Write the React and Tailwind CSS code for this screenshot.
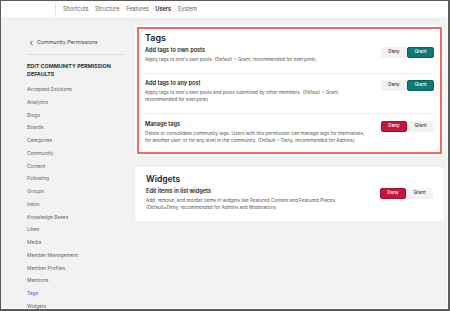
import React from "react";

const navItems = ["Shortcuts", "Structure", "Features", "Users", "System"];

const sideItems = [
  "Accepted Solutions",
  "Analytics",
  "Blogs",
  "Boards",
  "Categories",
  "Community",
  "Content",
  "Following",
  "Groups",
  "Inbox",
  "Knowledge Bases",
  "Likes",
  "Media",
  "Member Management",
  "Member Profiles",
  "Mentions",
  "Tags",
  "Widgets",
];

const tagRows = [
  {
    title: "Add tags to own posts",
    desc: ["Apply tags to one's own posts. (Default = Grant; recommended for everyone)"],
    value: "grant",
  },
  {
    title: "Add tags to any post",
    desc: [
      "Apply tags to one's own posts and posts submitted by other members. (Default = Grant;",
      "recommended for everyone)",
    ],
    value: "grant",
  },
  {
    title: "Manage tags",
    desc: [
      "Delete or consolidate community tags. Users with this permission can manage tags for themselves,",
      "for another user, or for any level in the community. (Default = Deny; recommended for Admins)",
    ],
    value: "deny",
  },
];

// Deny / Grant toggle
function Toggle({ value }) {
  return (
    <div className="flex shrink-0">
      <button
        className={
          value === "deny"
            ? "w-[26px] h-[11px] rounded-[2px] bg-[#c3173f] border border-[#a8102f] text-white text-[4.6px] font-medium leading-none"
            : "w-[26px] h-[11px] rounded-l-[2px] bg-[#f1f1f1] text-[#333] text-[4.6px] font-medium leading-none"
        }
      >
        Deny
      </button>
      <button
        className={
          value === "grant"
            ? "w-[27px] h-[11px] rounded-[2px] bg-[#0d7a74] border border-[#0a625d] text-white text-[4.6px] font-medium leading-none"
            : "w-[27px] h-[11px] rounded-r-[2px] bg-[#f3f3f3] text-[#333] text-[4.6px] font-medium leading-none"
        }
      >
        Grant
      </button>
    </div>
  );
}

function PermRow({ title, desc, value, index, last }) {
  const pad = index === 0 ? "pt-[2.5px]" : "pt-[6.5px] border-t border-[#ececec]";
  const bottom = last ? "pb-[8px]" : "pb-[10px]";
  return (
    <div className={`flex items-start justify-between ${pad} ${bottom}`}>
      <div>
        <div className="text-[5.6px] leading-[7px] font-semibold text-[#222] mb-[2px]">
          {title}
        </div>
        {desc.map((d) => (
          <div key={d} className="text-[4.7px] leading-[7px] text-[#555]">
            {d}
          </div>
        ))}
      </div>
      <Toggle value={value} />
    </div>
  );
}

export default function App() {
  return (
    <div className="w-[450px] h-[311px] border-t border-l border-r-2 border-b-2 border-[#5a5a5a] font-[Inter,sans-serif] overflow-hidden">
      <div className="h-full flex flex-col bg-[#f2f2f2] border-r border-b border-[#fbfbfb]">
        {/* Top nav */}
        <div className="h-[18px] shrink-0 bg-white border-b border-[#e8e8e8] flex items-center">
          <div className="w-[55px] h-[14px] border-r border-[#e6e6e6]" />
          <div className="flex items-center gap-[6.5px] pl-[7px]">
            {navItems.map((n) => (
              <span
                key={n}
                className={
                  n === "Users"
                    ? "text-[5.6px] font-semibold text-[#222]"
                    : "text-[5.6px] text-[#666]"
                }
              >
                {n}
              </span>
            ))}
          </div>
        </div>

        <div className="flex flex-1">
          {/* Sidebar */}
          <div className="w-[134px] shrink-0 pl-[26px] pr-[11px] pt-[20px]">
            <div className="flex items-center gap-[3px] pl-[2px] h-[8px]">
              <svg width="5" height="6" viewBox="0 0 5 6" fill="none">
                <path d="M3.5 0.8 L1.3 3 L3.5 5.2" stroke="#444" strokeWidth="0.9" />
              </svg>
              <span className="text-[5.3px] text-[#444]">Community Permissions</span>
            </div>
            <div className="border-b border-[#dcdcdc] mt-[6.5px]" />
            <div className="mt-[7px] text-[5.4px] leading-[8px] font-bold text-[#333] uppercase">
              Edit Community Permission
              <br />
              Defaults
            </div>
            <div className="mt-[6px] flex flex-col">
              {sideItems.map((s) => (
                <div
                  key={s}
                  className={
                    s === "Tags"
                      ? "h-[12.75px] flex items-center text-[4.9px] text-[#3c59d4]"
                      : "h-[12.75px] flex items-center text-[4.9px] text-[#666]"
                  }
                >
                  {s}
                </div>
              ))}
            </div>
          </div>

          {/* Main */}
          <div className="flex-1 pt-[6px] pr-[3px] flex flex-col gap-[11px]">
            <div className="bg-white rounded-[4px] p-[2px]">
              <div className="border-2 border-[#f26b5e] px-[6px] pt-[3px]">
                <div className="text-[9px] leading-[12px] font-semibold text-[#222]">Tags</div>
                {tagRows.map((r, i) => (
                  <PermRow key={r.title} {...r} index={i} last={i === tagRows.length - 1} />
                ))}
              </div>
            </div>

            <div className="bg-white rounded-[4px] px-[11px] pt-[6px] pb-[10px]">
              <div className="text-[8.5px] leading-[12px] font-semibold text-[#222]">Widgets</div>
              <div className="flex items-start justify-between pt-[3px]">
                <div>
                  <div className="text-[5.6px] leading-[7px] font-semibold text-[#222] mb-[2px]">
                    Edit items in list widgets
                  </div>
                  <div className="text-[4.7px] leading-[7px] text-[#555]">
                    Add, remove, and reorder items in widgets like Featured Content and Featured Places.
                  </div>
                  <div className="text-[4.7px] leading-[7px] text-[#555]">
                    (Default=Deny, recommended for Admins and Moderators)
                  </div>
                </div>
                <Toggle value="deny" />
              </div>
            </div>
          </div>
        </div>
      </div>
    </div>
  );
}
